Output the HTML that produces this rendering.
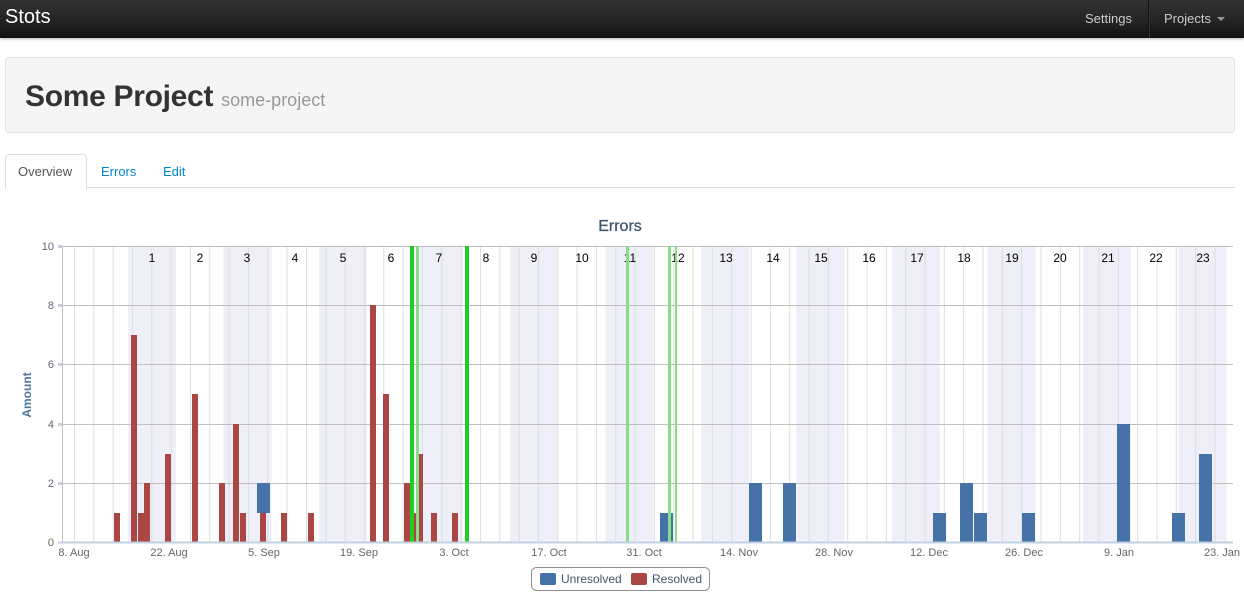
<!DOCTYPE html>
<html><head><meta charset="utf-8"><style>
body{margin:0;width:1244px;height:610px;overflow:hidden;font-family:"Liberation Sans",sans-serif;background:#fff;position:relative}
.nav{position:absolute;left:0;top:0;width:1244px;height:38px;background:linear-gradient(#333,#222 60%,#111);box-shadow:0 1px 3px rgba(0,0,0,.3)}
.brand{position:absolute;left:5px;top:6px;color:#fff;font-size:20px}
.nav .it{position:absolute;top:11px;color:#ccc;font-size:13px}
.hero{position:absolute;left:5px;top:57px;width:1228px;height:74px;background:#f5f5f5;border:1px solid #e3e3e3;border-radius:4px}
.hero h1{margin:0;position:absolute;left:19px;top:22px;font-size:30px;color:#333;font-weight:bold;letter-spacing:-0.3px}
.hero h1 small{font-size:18px;color:#999;font-weight:normal;letter-spacing:0}
.tabs{position:absolute;left:5px;top:187px;width:1230px;border-top:1px solid #ddd}
.tab{position:absolute;top:164px;font-size:13px;color:#0088cc}
.act{position:absolute;left:5px;top:154px;width:80px;height:34px;border:1px solid #ddd;border-bottom:1px solid #fff;border-radius:4px 4px 0 0;background:#fff}
</style></head><body>
<div class="nav"><div class="brand">Stots</div>
<div class="it" style="left:1085px">Settings</div>
<div style="position:absolute;left:1148px;top:0;width:1px;height:38px;background:#111;border-right:1px solid #333"></div>
<div class="it" style="left:1164px">Projects</div>
<div style="position:absolute;left:1217px;top:17px;border:4px solid transparent;border-top:4px solid #999"></div></div>
<div class="hero"><h1>Some Project <small>some-project</small></h1></div>
<div class="tabs"></div>
<div class="act"></div>
<div class="tab" style="left:18px;color:#555">Overview</div>
<div class="tab" style="left:101px">Errors</div>
<div class="tab" style="left:163px">Edit</div>
<svg width="1244" height="610" style="position:absolute;left:0;top:0" font-family="Liberation Sans, sans-serif">
<defs><pattern id="g" x="74" y="0" width="19.33" height="10" patternUnits="userSpaceOnUse"><line x1="0.5" y1="0" x2="0.5" y2="10" stroke="#ddd"/></pattern></defs>
<text x="620" y="231" text-anchor="middle" font-size="16" fill="#3e576f" stroke="#3e576f" stroke-width="0.3">Errors</text>
<g fill="#eeeff8">
<rect x="128" y="246" width="48" height="296"/><rect x="223.5" y="246" width="48" height="296"/><rect x="319" y="246" width="48" height="296"/><rect x="414.5" y="246" width="48" height="296"/><rect x="510" y="246" width="48" height="296"/><rect x="605.5" y="246" width="48" height="296"/><rect x="701" y="246" width="48" height="296"/><rect x="796.5" y="246" width="48" height="296"/><rect x="892" y="246" width="48" height="296"/><rect x="987.5" y="246" width="48" height="296"/><rect x="1083" y="246" width="48" height="296"/><rect x="1178.5" y="246" width="48" height="296"/></g>
<rect x="62" y="246" width="1171" height="296" fill="url(#g)"/>
<g stroke="#c0c0c0"><line x1="62" y1="246.5" x2="1233" y2="246.5"/><line x1="62" y1="305.5" x2="1233" y2="305.5"/><line x1="62" y1="364.5" x2="1233" y2="364.5"/><line x1="62" y1="424.5" x2="1233" y2="424.5"/><line x1="62" y1="483.5" x2="1233" y2="483.5"/><line x1="62.5" y1="246" x2="62.5" y2="542"/></g>
<g font-size="12" fill="#000" text-anchor="middle">
<text x="152" y="262">1</text><text x="200" y="262">2</text><text x="247" y="262">3</text><text x="295" y="262">4</text><text x="343" y="262">5</text><text x="391" y="262">6</text><text x="439" y="262">7</text><text x="486" y="262">8</text><text x="534" y="262">9</text><text x="582" y="262">10</text><text x="630" y="262">11</text><text x="678" y="262">12</text><text x="726" y="262">13</text><text x="773" y="262">14</text><text x="821" y="262">15</text><text x="869" y="262">16</text><text x="917" y="262">17</text><text x="964" y="262">18</text><text x="1012" y="262">19</text><text x="1060" y="262">20</text><text x="1108" y="262">21</text><text x="1156" y="262">22</text><text x="1203" y="262">23</text></g>
<g fill="#aa4643">
<rect x="114" y="513" width="6" height="29"/><rect x="131" y="335" width="6" height="207"/><rect x="138" y="513" width="6" height="29"/><rect x="144" y="483" width="6" height="59"/><rect x="165" y="454" width="6" height="88"/><rect x="192" y="394" width="6" height="148"/><rect x="219" y="483" width="6" height="59"/><rect x="233" y="424" width="6" height="118"/><rect x="240" y="513" width="6" height="29"/><rect x="260" y="513" width="6" height="29"/><rect x="281" y="513" width="6" height="29"/><rect x="308" y="513" width="6" height="29"/><rect x="370" y="305" width="6" height="237"/><rect x="383" y="394" width="6" height="148"/><rect x="404" y="483" width="6" height="59"/><rect x="411" y="513" width="6" height="29"/><rect x="417" y="454" width="6" height="88"/><rect x="431" y="513" width="6" height="29"/><rect x="452" y="513" width="6" height="29"/></g>
<g fill="#4572a7">
<rect x="257" y="483" width="13" height="30"/><rect x="660" y="513" width="13" height="29"/><rect x="749" y="483" width="13" height="59"/><rect x="783" y="483" width="13" height="59"/><rect x="933" y="513" width="13" height="29"/><rect x="960" y="483" width="13" height="59"/><rect x="974" y="513" width="13" height="29"/><rect x="1022" y="513" width="13" height="29"/><rect x="1117" y="424" width="13" height="118"/><rect x="1172" y="513" width="13" height="29"/><rect x="1199" y="454" width="13" height="88"/></g>
<g><rect x="410" y="246" width="4" height="296" fill="#22cc22"/><rect x="416" y="246" width="3" height="296" fill="#88dd88"/><rect x="465" y="246" width="4" height="296" fill="#22cc22"/><rect x="626" y="246" width="3" height="296" fill="#88dd88"/><rect x="668" y="246" width="3" height="296" fill="#88dd88"/><rect x="675" y="246" width="2" height="296" fill="#88dd88"/></g>
<line x1="58" y1="542.5" x2="1233" y2="542.5" stroke="#c0d0e0" stroke-width="2"/>
<g stroke="#c0d0e0" stroke-width="3"><line x1="58" y1="246.5" x2="62" y2="246.5"/><line x1="58" y1="305.5" x2="62" y2="305.5"/><line x1="58" y1="364.5" x2="62" y2="364.5"/><line x1="58" y1="424.5" x2="62" y2="424.5"/><line x1="58" y1="483.5" x2="62" y2="483.5"/></g>
<g font-size="11" fill="#666" text-anchor="end"><text x="54" y="250">10</text><text x="54" y="309">8</text><text x="54" y="368">6</text><text x="54" y="428">4</text><text x="54" y="487">2</text><text x="54" y="546">0</text></g>
<text x="31" y="395" transform="rotate(-90 31 395)" text-anchor="middle" font-size="12" font-weight="bold" fill="#4d759e">Amount</text>
<g font-size="11" fill="#666" text-anchor="middle"><text x="74" y="556">8. Aug</text><text x="169" y="556">22. Aug</text><text x="264" y="556">5. Sep</text><text x="359" y="556">19. Sep</text><text x="454" y="556">3. Oct</text><text x="549" y="556">17. Oct</text><text x="644" y="556">31. Oct</text><text x="739" y="556">14. Nov</text><text x="834" y="556">28. Nov</text><text x="929" y="556">12. Dec</text><text x="1024" y="556">26. Dec</text><text x="1119" y="556">9. Jan</text><text x="1222" y="556">23. Jan</text></g>
<rect x="531.5" y="567.5" width="178" height="23" rx="5" fill="#fff" stroke="#909090"/>
<rect x="540" y="573" width="16" height="12" rx="2" fill="#4572a7"/><text x="561" y="583" font-size="12" fill="#3e576f">Unresolved</text>
<rect x="631" y="573" width="16" height="12" rx="2" fill="#aa4643"/><text x="652" y="583" font-size="12" fill="#3e576f">Resolved</text>
</svg>
</body></html>
